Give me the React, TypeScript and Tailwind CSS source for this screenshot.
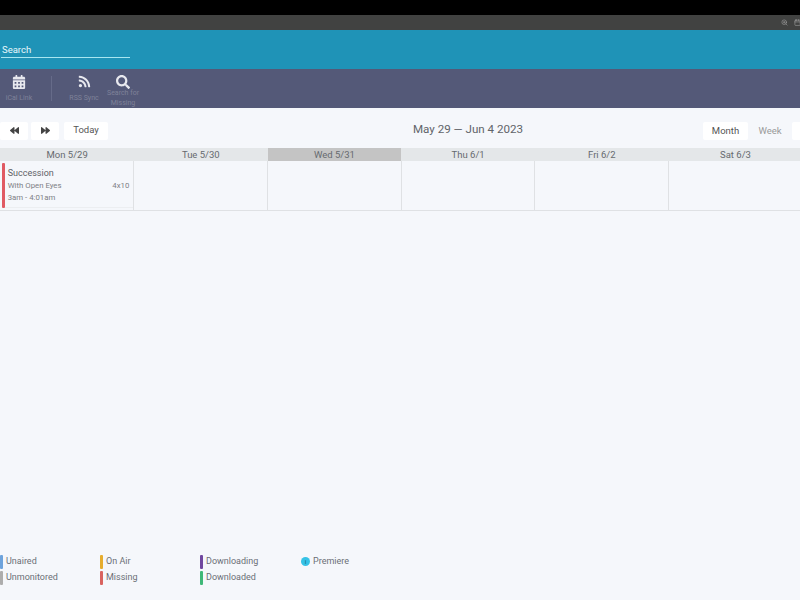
import { Calendar, ZoomIn } from "lucide-react";
import { FaBackward, FaForward, FaCalendarAlt, FaRss, FaSearch } from "react-icons/fa";

const days = ["Mon 5/29", "Tue 5/30", "Wed 5/31", "Thu 6/1", "Fri 6/2", "Sat 6/3", ""];

function Tool({ icon, label, cls }: { icon: React.ReactNode; label: React.ReactNode; cls: string }) {
  return (
    <div className={`flex flex-col items-center ${cls}`}>
      <div className="h-[15px] flex items-center justify-center text-[#e8e9ef]">{icon}</div>
      <div className="h-[19px] flex items-center text-[7px] leading-[9.5px] text-[#7f8299] text-center whitespace-nowrap">{label}</div>
    </div>
  );
}

function Legend({ color, label }: { color: string; label: string }) {
  return (
    <div className="flex items-center h-[16px]">
      <div className={`w-[3px] h-[14px] rounded-[1px] ${color}`} />
      <span className="ml-[3px] text-[9px] text-[#6b6f76]">{label}</span>
    </div>
  );
}

export default function App() {
  return (
    <div className="w-[800px] h-[600px] overflow-hidden flex flex-col bg-[#f5f7fb] font-['Roboto',sans-serif]">
      <div className="h-[15px] bg-black shrink-0" />
      <div className="h-[15px] bg-[#414241] shrink-0 flex items-center justify-end gap-[5px] text-[#a0a0a0]">
        <ZoomIn size={7} strokeWidth={2} className="mr-[1px]" />
        <Calendar size={7} strokeWidth={2} className="mr-[-1px]" />
      </div>
      <div className="h-[39px] bg-[#1f93b7] shrink-0 pl-[1px] pt-[11px]">
        <div className="w-[129px] h-[17px] border-b border-[#a8e6f0] text-[#e8f8fb] text-[9.5px] leading-[17px] pl-[1px]">Search</div>
      </div>
      <div className="h-[39px] bg-[#545978] shrink-0 flex items-start pt-[5px]">
        <Tool cls="w-[38px]" icon={<FaCalendarAlt size={14} />} label="iCal Link" />
        <div className="w-px h-[25px] bg-[#666b89] ml-[13px] mt-[2px]" />
        <Tool cls="w-[38px] ml-[13px]" icon={<FaRss size={13} />} label="RSS Sync" />
        <Tool cls="w-[38px] ml-[1px]" icon={<FaSearch size={14} />} label={<span>Search for<br />Missing</span>} />
      </div>
      <div className="flex items-center h-[40px] shrink-0 relative pt-[5px]">
        <div className="flex items-center">
          <div className="w-[28px] h-[18px] bg-white rounded-[2px] flex items-center justify-center text-[#444]"><FaBackward size={9} /></div>
          <div className="w-[28px] h-[18px] ml-[3px] bg-white rounded-[2px] flex items-center justify-center text-[#444]"><FaForward size={9} /></div>
          <div className="w-[44px] h-[18px] ml-[5px] bg-white rounded-[2px] flex items-center justify-center text-[9.5px] text-[#555]">Today</div>
        </div>
        <div className="absolute left-[413px] top-[13px] text-[11.6px] leading-[16px] text-[#616469]">May 29 — Jun 4 2023</div>
        <div className="absolute left-[703px] top-[14px] flex">
          <div className="w-[45px] h-[18px] bg-white rounded-[2px] flex items-center justify-center text-[9.5px] text-[#555]">Month</div>
          <div className="w-[44px] h-[18px] flex items-center justify-center text-[9.5px] text-[#999]">Week</div>
          <div className="w-[20px] h-[18px] bg-white rounded-[2px]" />
        </div>
      </div>
      <div className="flex w-[936px] shrink-0 bg-[#e4e7e9] pl-[0.3px]">
        {days.map((d, i) => (
          <div key={i} className={`w-[133.7px] h-[13px] text-center text-[9.5px] leading-[13px] text-[#666a6f] ${d === "Wed 5/31" ? "bg-[#c4c4c4]" : "bg-[#e4e7e9]"}`}>{d}</div>
        ))}
      </div>
      <div className="flex w-[936px] h-[50px] shrink-0 border-b border-[#dfe1e4] pl-[0.7px]">
        {days.map((d, i) => (
          <div key={i} className="w-[133.7px] h-full border-r border-[#dfe1e4] relative">
            {i === 0 && (
              <div className="flex h-[45px] mt-[2px] ml-[1px]">
                <div className="w-[3px] h-full bg-[#e05a63] rounded-[1px]" />
                <div className="flex-1 pl-[3px] pr-[4px] border-b border-[#eceef1]">
                  <div className="text-[9px] leading-[12px] mt-[4px] text-[#5e6166]">Succession</div>
                  <div className="flex justify-between text-[7.8px] leading-[12px] mt-[1px] text-[#7d8085]"><span>With Open Eyes</span><span>4x10</span></div>
                  <div className="text-[7.8px] leading-[12px] text-[#7d8085]">3am - 4:01am</div>
                </div>
              </div>
            )}
          </div>
        ))}
      </div>
      <div className="flex-1" />
      <div className="flex pb-[14px]">
        <div className="w-[100px]"><Legend color="bg-[#6ea3dc]" label="Unaired" /><Legend color="bg-[#adadad]" label="Unmonitored" /></div>
        <div className="w-[100px]"><Legend color="bg-[#e6ad2e]" label="On Air" /><Legend color="bg-[#d9635f]" label="Missing" /></div>
        <div className="w-[100px]"><Legend color="bg-[#70479f]" label="Downloading" /><Legend color="bg-[#3fb878]" label="Downloaded" /></div>
        <div className="flex items-center h-[15px] ml-[1px]">
          <div className="w-[9px] h-[9px] rounded-full bg-[#35c2e6] flex items-center justify-center text-[6px] font-bold text-[#1f7d9a]">i</div>
          <span className="ml-[3px] text-[9px] text-[#6b6f76]">Premiere</span>
        </div>
      </div>
    </div>
  );
}
